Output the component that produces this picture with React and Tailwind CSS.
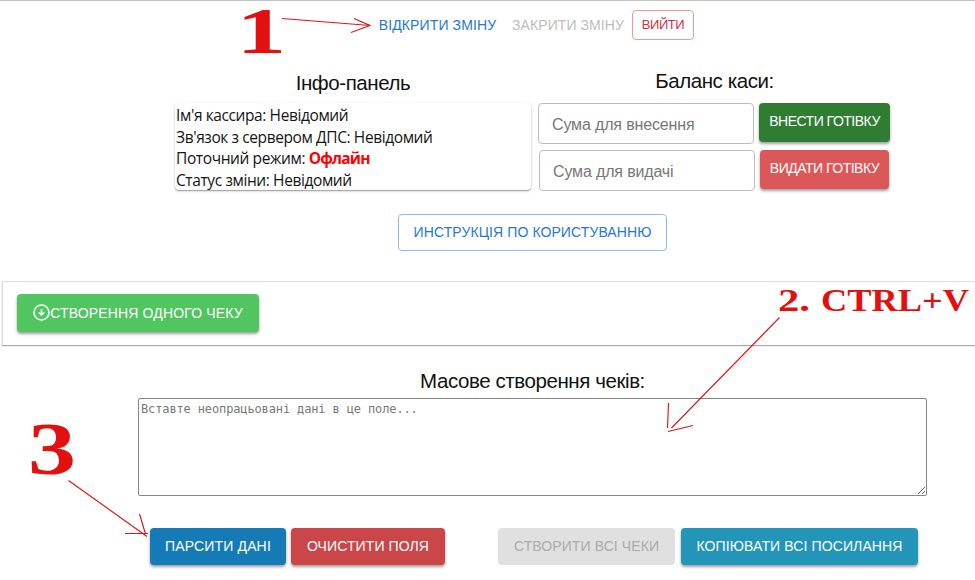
import React from 'react';

const raised = 'shadow-[0_2px_3px_rgba(0,0,0,0.38)]';

function Button({ className = '', children }) {
  return (
    <button className={`flex shrink-0 items-center justify-center whitespace-nowrap rounded-[4px] ${className}`}>
      {children}
    </button>
  );
}

function Heading({ className = '', children }) {
  return <h2 className={`whitespace-nowrap text-center text-[20.5px] leading-6 tracking-[-0.42px] text-[#111] ${className}`}>{children}</h2>;
}

function AmountField({ className = '', placeholder }) {
  return (
    <input
      className={`h-[41px] w-[216px] shrink-0 rounded-[4px] border border-[#bdbdbd] px-[13px] pt-[2px] text-[16px] tracking-[-0.15px] placeholder-[#777] ${className}`}
      placeholder={placeholder}
    />
  );
}

function Annotations() {
  return (
    <svg className="pointer-events-none absolute -top-px left-0 overflow-visible" width="975" height="580" fill="none" stroke="#e31313" strokeWidth="1.15">
      <path d="M282 18.500L370 25.500M354 18.500L370 25.500L351 32.500" />
      <path d="M779.500 317.500L671.500 428M668.500 403L667.500 428M668 431.500L693 425.500" />
      <path d="M68.500 480.500L147 536.500M139.500 514L145.500 534M125 533.500H148" />
      <g fill="#e31010" stroke="none" fontFamily="'Liberation Serif', serif" fontWeight="700">
        <text transform="translate(236.500 52.500) scale(1.53 1)" fontSize="65">1</text>
        <text transform="translate(28 474) scale(1.28 1)" fontSize="75">3</text>
        <g fontSize="31.500">
          <text x="778" y="311" textLength="32" lengthAdjust="spacingAndGlyphs">2.</text>
          <text x="821" y="311" textLength="148" lengthAdjust="spacingAndGlyphs">CTRL+V</text>
        </g>
      </g>
    </svg>
  );
}

export default function App() {
  return (
    <main className="relative flex h-[580px] w-[975px] flex-col overflow-hidden border-t border-[#c5c5c5] bg-white font-['Liberation_Sans',Arial,sans-serif] text-[14px]">
      <nav className="mt-[9px] flex h-[30px] shrink-0 pl-[370px]">
        <Button className="w-[135px] tracking-[0.12px] text-[#2878d0]">ВІДКРИТИ ЗМІНУ</Button>
        <Button className="w-[126px] tracking-[0.08px] text-[#bdbdbd]">ЗАКРИТИ ЗМІНУ</Button>
        <Button className="ml-px w-[62px] border border-[#e99a9a] pb-px text-[13px] tracking-[-0.4px] text-[#d32f3f]">ВИЙТИ</Button>
      </nav>

      <div className="flex h-[151px] shrink-0 pl-[175px] pt-[28px]">
        <section className="w-[356px] pt-[3px]">
          <Heading>Інфо-панель</Heading>
          <div className="mt-[8px] h-[87px] rounded-[4px] pl-px pt-[2px] font-['Open_Sans','Noto_Sans',sans-serif] text-[15.5px] leading-[21.5px] tracking-[-0.4px] text-[#151515] shadow-[0_1px_3px_rgba(0,0,0,0.22),0_1px_1px_rgba(0,0,0,0.25)]">
            <p>Ім'я кассира: Невідомий</p>
            <p>Зв'язок з сервером ДПС: Невідомий</p>
            <p>Поточний режим: <strong className="font-bold tracking-[-0.8px] text-[#f00]">Офлайн</strong></p>
            <p>Статус зміни: Невідомий</p>
          </div>
        </section>
        <section className="ml-[7px] w-[353px]">
          <Heading className="pt-px">Баланс каси:</Heading>
          <div className="mt-[10px] flex">
            <AmountField placeholder="Сума для внесення" />
            <Button className={`ml-[5px] h-[39px] w-[131px] bg-[#2e7d32] pb-[3px] text-[14px] tracking-[-0.5px] text-white ${raised}`}>ВНЕСТИ ГОТІВКУ</Button>
          </div>
          <div className="mt-[6px] flex pl-px">
            <AmountField placeholder="Сума для видачі" />
            <Button className={`ml-[5px] h-[39px] w-[129px] bg-[#dc5759] pb-[3px] text-[14px] tracking-[-0.5px] text-white ${raised}`}>ВИДАТИ ГОТІВКУ</Button>
          </div>
        </section>
      </div>

      <div className="mt-[23px] flex shrink-0 pl-[398px]">
        <Button className="h-[37px] w-[269px] border border-[#8fbbe8] text-[14px] tracking-[0.09px] text-[#2878d0]">ИНСТРУКЦІЯ ПО КОРИСТУВАННЮ</Button>
      </div>

      <section className="ml-[2px] mt-[30px] h-[64px] shrink-0 border-l border-t border-[#dedede] pl-[14px] pt-[12px] shadow-[0_1px_1px_#aaa]">
        <Button className={`h-[38px] w-[242px] bg-[#51c560] text-[14px] tracking-[0.15px] text-white ${raised}`}>
          <svg className="mb-px" width="17" height="17" viewBox="0 0 17 17" fill="none" stroke="white" strokeWidth="1.6">
            <circle cx="8.5" cy="8.5" r="7.5" />
            <path d="M8.500 5V11M5.800 8.400L8.500 11L11.200 8.400" />
          </svg>
          СТВОРЕННЯ ОДНОГО ЧЕКУ
        </Button>
      </section>

      <section className="mt-[24px] shrink-0 pl-[138px]">
        <Heading className="w-[789px]">Масове створення чеків:</Heading>
        <textarea
          className="mt-[5px] block h-[98px] w-[789px] rounded-[2px] border border-[#858585] p-[2px] font-['DejaVu_Sans_Mono',monospace] text-[12px] leading-[16px] tracking-[-0.13px] placeholder-[#777]"
          placeholder="Вставте неопрацьовані дані в це поле..."
        />
      </section>

      <div className="mt-[32px] flex h-[37px] shrink-0 pl-[150px] text-[14px] text-white">
        <Button className={`w-[136px] bg-[#147bb6] tracking-[0.15px] ${raised}`}>ПАРСИТИ ДАНІ</Button>
        <Button className={`ml-[5px] w-[154px] bg-[#ca4649] tracking-[0.1px] ${raised}`}>ОЧИСТИТИ ПОЛЯ</Button>
        <Button className="ml-[53px] w-[177px] bg-[#e0e0e0] tracking-[0.1px] text-[#ababab]">СТВОРИТИ ВСІ ЧЕКИ</Button>
        <Button className={`ml-[6px] w-[237px] bg-[#2395b9] tracking-[0.12px] ${raised}`}>КОПІЮВАТИ ВСІ ПОСИЛАННЯ</Button>
      </div>
      <Annotations />
    </main>
  );
}
